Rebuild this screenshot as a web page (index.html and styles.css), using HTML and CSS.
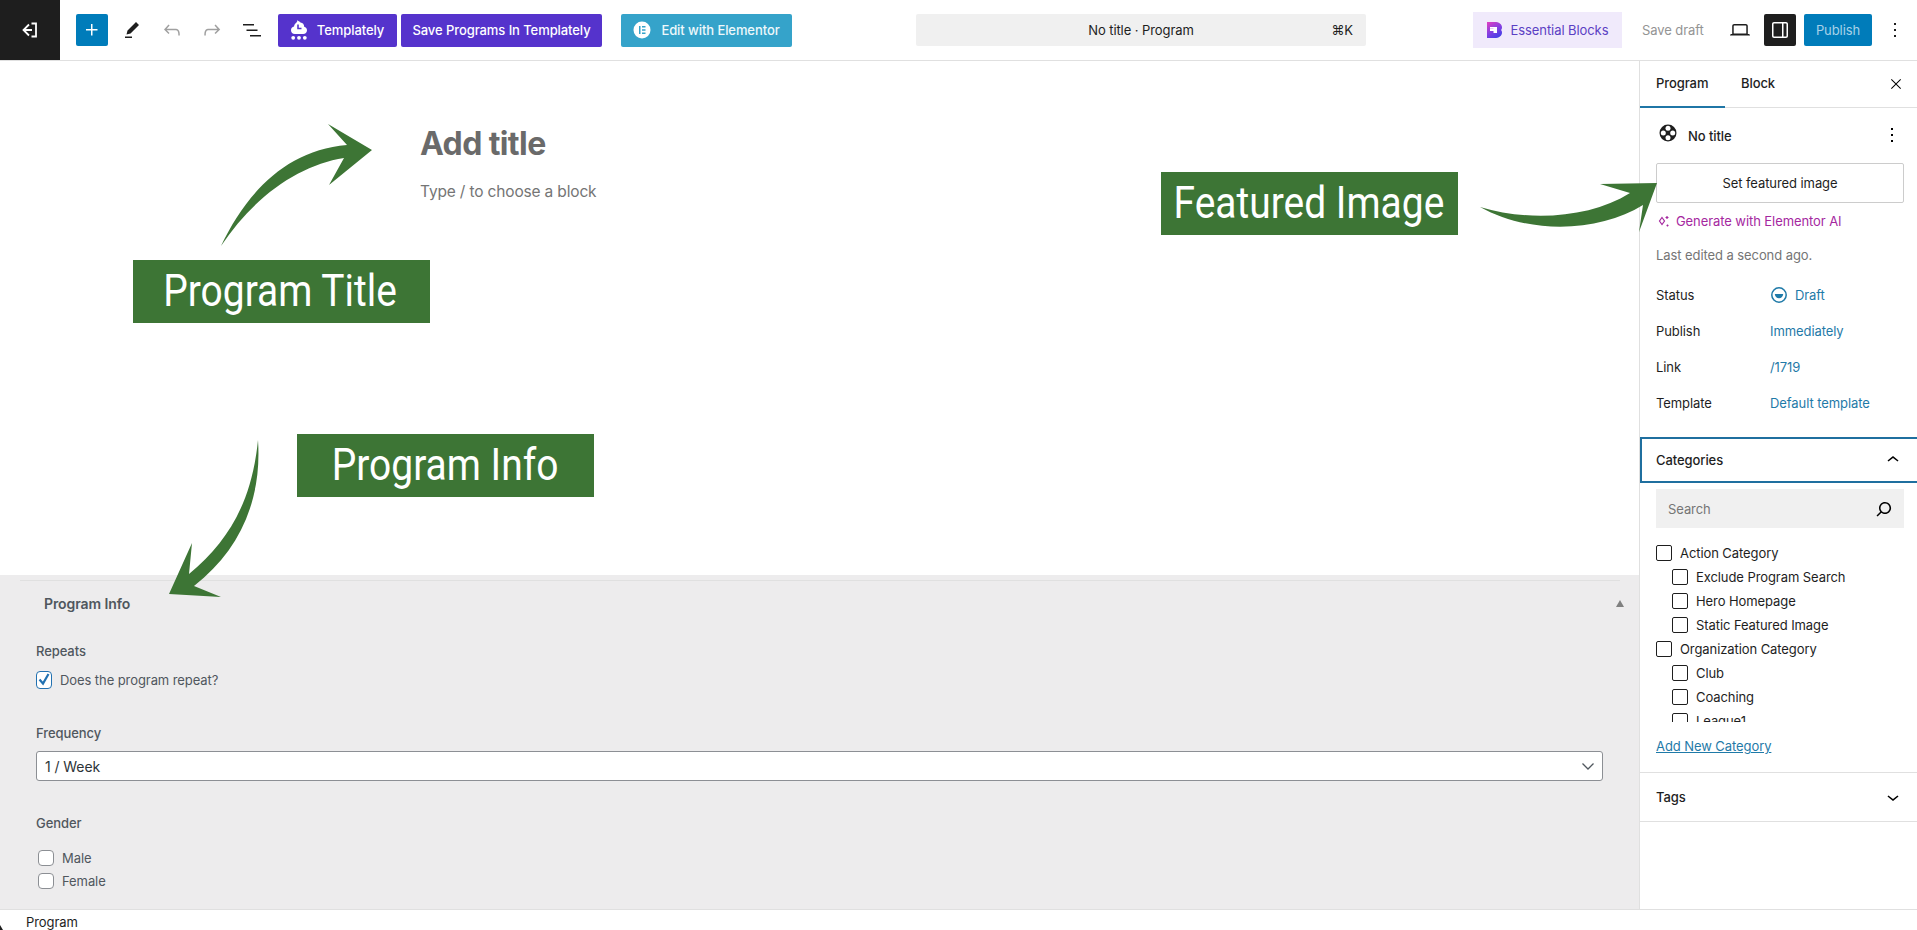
FILE: index.html
```html
<!DOCTYPE html>
<html lang="en">
<head>
<meta charset="utf-8">
<title>No title - Program</title>
<link rel="stylesheet" href="styles.css">
</head>
<body>
<div class="app">
  <header class="topbar">
    <a class="back"><svg width="24" height="24" viewBox="0 0 24 24" class="back-ico"><path d="M11 6.500 5.500 12l5.500 5.500M5.500 12H14M13.500 5.500H18V18.500H13.500"/></svg></a>
    <div class="tools">
      <button class="add"><svg width="24" height="24" viewBox="0 0 24 24"><path d="M11 12.500V17.500H12.500V12.500H17.500V11H12.500V6H11V11H6V12.500H11Z"/></svg></button>
      <button class="tool"><svg width="24" height="24" viewBox="0 0 24 24"><path d="m19 7-3-3-8.500 8.500-1 4 4-1L19 7Zm-7 11.500H5V20h7v-1.500Z"/></svg></button>
      <button class="tool dim"><svg width="24" height="24" viewBox="0 0 24 24"><path d="M18.300 11.700c-.6-.6-1.400-.9-2.300-.9H6.700l2.900-3.300-1.100-1-4.500 5L8.500 16l1-1-2.700-2.700H16c.5 0 .9.200 1.300.5 1 1 1 3.400 1 4.500v.3h1.500v-.2c0-1.500 0-4.300-1.500-5.700z"/></svg></button>
      <button class="tool dim"><svg width="24" height="24" viewBox="0 0 24 24"><path d="M15.600 6.500l-1.100 1 2.900 3.300H8c-.9 0-1.700.3-2.300.9-1.400 1.500-1.400 4.200-1.400 5.600v.2h1.500v-.3c0-1.100 0-3.500 1-4.500.3-.3.7-.5 1.300-.5h9.200L14.500 15l1.100 1.100 4.600-4.600-4.600-5z"/></svg></button>
      <button class="tool"><svg width="24" height="24" viewBox="0 0 24 24"><path d="M3 6h11v1.500H3V6Zm3.500 5.500h11V13h-11v-1.500ZM21 17H10v1.500h11V17Z"/></svg></button>
    </div>
    <button class="btn purple templately"><svg width="16" height="20" viewBox="0 0 16 20" class="tpl-ico"><path d="M6.500 0c.3 1.500 2.300 1 3 2.600 2.300.2 3.700 2 3.700 4.200 1.700.3 2.800 1.700 2.800 3.400 0 2-1.600 3.800-3.800 3.800H3.800C1.600 14 0 12.300 0 10.200 0 8.400 1.200 6.900 3 6.600c.2-2 1.500-3.200 2.500-4 .5-.7.900-1.600 1-2.600Z"/><path class="cut" d="M7 4.500v4h3.500"/><circle cx="2.200" cy="17.800" r="1.900"/><circle cx="8" cy="17.800" r="1.900"/><circle cx="13.800" cy="17.800" r="1.900"/></svg>Templately</button>
    <button class="btn purple save-tpl">Save Programs In Templately</button>
    <button class="btn elementor"><svg width="18" height="18" viewBox="0 0 18 18"><circle cx="9" cy="9" r="8.500" fill="#fff"/><path class="el-e" d="M6 5h1.500v8H6zM9 5h3.500v1.500H9zM9 8.250h3.500v1.500H9zM9 11.500h3.500V13H9z"/></svg>Edit with Elementor</button>
    <div class="command"><span class="command-title">No title · Program</span><span class="command-key">⌘K</span></div>
    <div class="actions">
      <div class="eb"><svg width="15" height="16" viewBox="0 0 15 16"><defs><linearGradient id="ebg" x1="0" y1="0" x2="0.600" y2="1"><stop offset="0" stop-color="#e23fc0"/><stop offset="0.550" stop-color="#8a3fe0"/><stop offset="1" stop-color="#4a3fe6"/></linearGradient></defs><path d="M0 0h7.500C12 0 15 2 15 5.500c0 1-.4 1.900-1 2.500.6.600 1 1.500 1 2.500C15 14 12 16 7.500 16H0Z" fill="url(#ebg)"/><path d="M3 5h7v6H6.500V9H3V7h3.500V6.800H3Z" fill="#fff"/></svg><span>Essential Blocks</span></div>
      <span class="draft">Save draft</span>
      <button class="icon-plain laptop"><svg width="24" height="24" viewBox="0 0 24 24"><path d="M20.500 16h-.7V8c0-1.100-.9-2-2-2H6.200c-1.100 0-2 .9-2 2v8h-.7c-.8 0-1.500.7-1.500 1.500h20c0-.8-.7-1.500-1.500-1.500zM5.700 8c0-.3.200-.5.500-.5h11.600c.3 0 .5.200.5.500v7.600H5.700V8z"/></svg></button>
      <button class="toggle"><svg width="24" height="24" viewBox="0 0 24 24"><path d="M18 4H6c-1.100 0-2 .9-2 2v12c0 1.100.9 2 2 2h12c1.100 0 2-.9 2-2V6c0-1.100-.9-2-2-2zm-4 14.500H6c-.3 0-.5-.2-.5-.5V6c0-.3.200-.5.500-.5h8v13zm4.500-.5c0 .3-.2.500-.5.500h-2.500v-13H18c.3 0 .5.200.5.500v12z"/></svg></button>
      <button class="publish">Publish</button>
      <button class="icon-plain more"><svg width="24" height="24" viewBox="0 0 24 24"><path d="M13 19h-2v-2h2v2zm0-6h-2v-2h2v2zm0-6h-2V5h2v2z"/></svg></button>
    </div>
  </header>

  <div class="workspace">
    <main class="editor">
      <section class="canvas">
        <h1 class="add-title">Add title</h1>
        <p class="appender">Type / to choose a block</p>
      </section>
      <section class="meta">
        <div class="meta-head"><h2>Program Info</h2><span class="tri"></span></div>
        <div class="field repeats">
          <div class="field-label">Repeats</div>
          <label class="check-line"><span class="meta-check on"><svg width="14" height="14" viewBox="0 0 14 14"><path d="M2.500 7.500 6 11.500 11.500 2"/></svg></span>Does the program repeat?</label>
        </div>
        <div class="field freq">
          <div class="field-label">Frequency</div>
          <div class="select"><span>1 / Week</span><svg width="16" height="16" viewBox="0 0 16 16"><path d="M2.500 5.500 8 11l5.500-5.500"/></svg></div>
        </div>
        <div class="field gender">
          <div class="field-label">Gender</div>
          <label class="opt"><span class="meta-check round"></span>Male</label>
          <label class="opt"><span class="meta-check round"></span>Female</label>
        </div>
      </section>
    </main>

    <aside class="sidebar">
      <div class="tabs">
        <span class="tab active">Program</span>
        <span class="tab">Block</span>
        <svg class="close" width="16" height="16" viewBox="0 0 24 24"><path d="m13.060 12 6.470-6.470-1.060-1.060L12 10.940 5.530 4.470 4.470 5.530 10.940 12l-6.470 6.470 1.060 1.060L12 13.060l6.470 6.470 1.060-1.060L13.060 12Z"/></svg>
      </div>
      <div class="summary">
        <div class="doc-row">
          <svg class="reel" width="18" height="18" viewBox="0 0 18 18"><circle cx="9" cy="9" r="8.500"/><circle class="hole" cx="9" cy="4.300" r="2.500"/><circle class="hole" cx="9" cy="13.700" r="2.500"/><circle class="hole" cx="4.300" cy="9" r="2.500"/><circle class="hole" cx="13.700" cy="9" r="2.500"/></svg>
          <strong>No title</strong>
          <svg class="doc-more" width="24" height="24" viewBox="0 0 24 24"><path d="M13 19h-2v-2h2v2zm0-6h-2v-2h2v2zm0-6h-2V5h2v2z"/></svg>
        </div>
        <button class="featured">Set featured image</button>
        <a class="gen"><svg width="14" height="14" viewBox="0 0 14 14"><path d="M6 3.500 8.500 7 6 10.500 3.500 7Z" class="spark"/><path d="M11 2v3M9.500 3.500h3M11.500 10.500v2M10.500 11.500h2" class="spark"/></svg>Generate with Elementor AI</a>
        <p class="edited">Last edited a second ago.</p>
        <dl class="props">
          <div class="prop"><dt>Status</dt><dd class="status"><svg width="18" height="18" viewBox="0 0 18 18"><circle cx="9" cy="9" r="7.200" class="ring"/><path d="M4.800 8h8.400a4.200 4.200 0 0 1-8.400 0Z" class="fill"/></svg>Draft</dd></div>
          <div class="prop"><dt>Publish</dt><dd>Immediately</dd></div>
          <div class="prop"><dt>Link</dt><dd>/1719</dd></div>
          <div class="prop"><dt>Template</dt><dd>Default template</dd></div>
        </dl>
      </div>
      <div class="panel-head focus"><span>Categories</span><svg width="24" height="24" viewBox="0 0 24 24"><path d="M6.500 12.400L12 8l5.500 4.400-.9 1.200L12 10l-4.500 3.600-1-1.200z"/></svg></div>
      <div class="panel-body">
        <div class="search"><span>Search</span><svg width="24" height="24" viewBox="0 0 24 24"><path d="M13 5c-3.300 0-6 2.700-6 6 0 1.400.5 2.700 1.300 3.700l-3.800 3.800 1.100 1.100 3.800-3.800c1 .8 2.300 1.300 3.700 1.300 3.300 0 6-2.700 6-6S16.300 5 13 5zm0 10.500c-2.500 0-4.500-2-4.500-4.500s2-4.500 4.500-4.500 4.500 2 4.500 4.500-2 4.500-4.500 4.500z"/></svg></div>
        <ul class="cats">
          <li><span class="box"></span>Action Category</li>
          <li class="child"><span class="box"></span>Exclude Program Search</li>
          <li class="child"><span class="box"></span>Hero Homepage</li>
          <li class="child"><span class="box"></span>Static Featured Image</li>
          <li><span class="box"></span>Organization Category</li>
          <li class="child"><span class="box"></span>Club</li>
          <li class="child"><span class="box"></span>Coaching</li>
          <li class="child"><span class="box"></span>League1</li>
        </ul>
        <a class="add-cat">Add New Category</a>
      </div>
      <div class="panel-head tags"><span>Tags</span><svg width="24" height="24" viewBox="0 0 24 24"><path d="M17.500 11.600L12 16l-5.500-4.400.9-1.200L12 14l4.500-3.600 1 1.200z"/></svg></div>
    </aside>
  </div>

  <footer class="crumbs">Program</footer>
</div>

<div class="notes">
  <svg class="arrows" width="1917" height="930" viewBox="0 0 1917 930">
    <path d="M221 246C245 195 285 150 347 145L328 124L372 150L329 185L344 158C300 165 255 195 221 246Z"/>
    <path d="M1480 207C1530 222 1590 218 1630 193L1600 184L1657 183L1639 232L1643 205C1600 232 1530 235 1480 207Z"/>
    <path d="M258 440C262 500 240 550 194 586L221 597L169 594L192 543L189 574C230 540 252 500 258 440Z"/>
  </svg>
  <div class="note note-title"><span>Program Title</span></div>
  <div class="note note-image"><span>Featured Image</span></div>
  <div class="note note-info"><span>Program Info</span></div>
</div>
</body>
</html>
```
FILE: styles.css
```css
* { box-sizing: border-box; }
html, body { margin: 0; height: 100%; overflow: hidden; background: #fff; }
body { font-family: Inter, "Noto Sans", sans-serif; font-size: 13px; letter-spacing: -0.08px; color: #1e1e1e; position: relative; }
button { font: inherit; letter-spacing: inherit; border: 0; background: none; padding: 0; color: inherit; }
svg { display: block; flex: none; }
h1, h2, p, dl, dd, ul { margin: 0; padding: 0; }
ul { list-style: none; }

.app { display: flex; flex-direction: column; height: 930px; }

/* Top bar */
.topbar { display: flex; align-items: center; height: 61px; flex: none; border-bottom: 1px solid #e0e0e0; }
.back { width: 60px; height: 60px; background: #1e1e1e; display: flex; align-items: center; justify-content: center; }
.back-ico { fill: none; stroke: #fff; stroke-width: 1.800; }
.tools { display: flex; align-items: center; margin-left: 16px; }
.add { width: 32px; height: 32px; background: #007cba; fill: #fff; border-radius: 2px; display: flex; align-items: center; justify-content: center; margin-right: 4px; }
.tool { width: 40px; height: 32px; display: flex; align-items: center; justify-content: center; fill: #1e1e1e; }
.tool.dim { fill: #a0a0a0; }
.btn { height: 33px; border-radius: 2px; color: #fff; font-weight: 500; display: flex; align-items: center; justify-content: center; }
.purple { background: #5533cc; }
.templately { width: 119px; margin-left: 6px; gap: 10px; }
.tpl-ico { fill: #fff; }
.tpl-ico .cut { fill: none; stroke: #5533cc; stroke-width: 1.600; }
.save-tpl { width: 201px; margin-left: 4px; }
.elementor { width: 171px; margin-left: 19px; background: #35a3ca; gap: 10px; color: #eef8fb; }
.el-e { fill: #35a3ca; }
.command { width: 450px; height: 32px; margin-left: 124px; background: #f0f0f0; border-radius: 2px; display: flex; align-items: center; justify-content: center; position: relative; }
.command-key { position: absolute; right: 13px; }
.actions { margin-left: auto; display: flex; align-items: center; padding-right: 10px; }
.eb { width: 149px; height: 36px; background: #f0eafb; display: flex; align-items: center; justify-content: center; gap: 9px; color: #5b3fc4; }
.draft { margin-left: 20px; width: 61px; color: #949494; white-space: nowrap; }
.icon-plain { width: 24px; height: 24px; fill: #1e1e1e; }
.laptop { margin-left: 25px; }
.toggle { width: 32px; height: 32px; margin-left: 12px; background: #1e1e1e; fill: #fff; border-radius: 2px; display: flex; align-items: center; justify-content: center; }
.publish { width: 68px; height: 32px; margin-left: 8px; background: #007cba; color: #a8d2e8; border-radius: 2px; }
.more { margin-left: 11px; }

/* Workspace */
.workspace { flex: 1; min-height: 0; display: flex; }
.editor { flex: 1; min-width: 0; display: flex; flex-direction: column; overflow: hidden; }
.canvas { height: 514px; flex: none; padding: 63px 0 0 420px; }
.add-title { font-size: 32px; line-height: 40px; font-weight: 700; color: #6a6a6a; letter-spacing: -0.6px; }
.appender { margin-top: 16px; font-size: 15.500px; line-height: 24px; letter-spacing: -0.16px; color: #757575; }

.meta { flex: 1; background: #edeced; color: #50575e; padding-top: 5px; }
.meta-head { margin: 0 19px 0 20px; border-top: 1px solid #e0e0e0; height: 46px; padding-left: 24px; display: flex; align-items: center; justify-content: space-between; }
.meta-head h2 { font-size: 14px; line-height: 46px; font-weight: 600; }
.tri { width: 0; height: 0; border-left: 4px solid transparent; border-right: 4px solid transparent; border-bottom: 7px solid #808080; margin-right: -4px; }
.field { padding: 0 36px; }
.field-label { line-height: 16px; font-weight: 500; }
.repeats { margin-top: 17px; }
.check-line { display: flex; align-items: center; gap: 8px; margin-top: 13px; height: 16px; }
.meta-check { width: 16px; height: 16px; background: #fff; border: 1px solid #8c8f94; border-radius: 4px; display: block; }
.meta-check.on { border-color: #2271b1; height: 18px; width: 16px; }
.meta-check.on svg { fill: none; stroke: #2271b1; stroke-width: 2.200; }
.freq { margin-top: 37px; }
.select { margin-top: 10px; height: 30px; width: 1567px; background: #fff; border: 1px solid #8c8f94; border-radius: 3px; color: #2c3338; font-size: 14px; padding: 0 6px 0 8px; display: flex; align-items: center; justify-content: space-between; }
.select svg { fill: none; stroke: #50575e; stroke-width: 1.300; }
.gender { margin-top: 34px; }
.opt { display: flex; align-items: center; gap: 8px; padding-left: 2px; height: 16px; margin-top: 7px; }
.gender .field-label + .opt { margin-top: 19px; }

/* Sidebar */
.sidebar { width: 278px; flex: none; border-left: 1px solid #e0e0e0; }
.tabs { height: 47px; border-bottom: 1px solid #e0e0e0; display: flex; align-items: center; position: relative; }
.tab { height: 47px; line-height: 44px; padding: 0 16px; font-weight: 500; }
.tab.active { width: 85px; box-shadow: inset 0 -2px 0 #1f76a6; }
.close { position: absolute; right: 13px; top: 15px; }
.summary { padding: 0 16px 16px; }
.doc-row { display: flex; align-items: center; height: 55px; position: relative; }
.reel { margin-left: 3px; margin-top: -5px; fill: #1e1e1e; }
.reel .hole { fill: #fff; }
.doc-row strong { margin-left: 11px; font-weight: 500; }
.doc-more { position: absolute; right: -3px; top: 15px; }
.featured { display: block; width: 248px; height: 40px; background: #fff; border: 1px solid #ccc; border-radius: 2px; }
.gen { display: flex; align-items: center; gap: 6px; margin-top: 9px; height: 18px; color: #a5289f; }
.spark { fill: none; stroke: #a5289f; stroke-width: 1.200; }
.edited { margin-top: 16px; line-height: 18px; color: #757575; }
.props { margin-top: 13px; }
.prop { display: flex; align-items: center; height: 36px; }
.prop dt { width: 114px; }
.prop dd { color: #1f7aa8; }
.status { display: flex; align-items: center; gap: 7px; }
.ring { fill: none; stroke: #1f7aa8; stroke-width: 1.500; }
.fill { fill: #1f7aa8; }
.panel-head { display: flex; align-items: center; justify-content: space-between; padding: 0 12px 0 14px; font-weight: 500; }
.focus { height: 46px; border: 2px solid #1f6f9f; border-right: 0; padding: 0 12px 0 14px; }
.panel-body { padding: 6px 13px 0 16px; height: 290px; border-bottom: 1px solid #e0e0e0; }
.search { width: 248px; height: 39px; background: #f0f0f0; display: flex; align-items: center; justify-content: space-between; padding: 0 8px 0 12px; color: #757575; }
.cats { margin-top: 13px; height: 181px; overflow: hidden; }
.cats li { display: flex; align-items: center; height: 24px; gap: 8px; }
.cats .child { padding-left: 16px; }
.box { width: 16px; height: 16px; border: 1px solid #1e1e1e; border-radius: 2px; background: #fff; }
.add-cat { display: block; margin-top: 15px; line-height: 18px; color: #1f7aa8; text-decoration: underline; }
.tags { height: 49px; padding: 0 12px 0 16px; border-bottom: 1px solid #e0e0e0; }

/* Breadcrumb */
.crumbs { height: 21px; flex: none; border-top: 1px solid #e0e0e0; padding: 5px 0 0 26px; line-height: 15px; color: #1e1e1e; position: relative; overflow: hidden; }
.crumbs::before { content: ""; position: absolute; left: 0; bottom: 0; border-left: 3px solid #1e1e1e; border-top: 5px solid transparent; }

/* Annotations painted on top of the screenshot */
.notes { position: absolute; inset: 0; pointer-events: none; }
.arrows { position: absolute; left: 0; top: 0; fill: #3d7535; }
.note { position: absolute; width: 297px; height: 63px; background: #3d7535; color: #fff; font-family: Roboto, sans-serif; font-size: 44px; letter-spacing: 0; line-height: 63px; text-align: center; overflow: hidden; white-space: nowrap; }
.note span { display: inline-block; transform: scaleX(0.885); transform-origin: center; margin: 0 -30px; }
.note-title { left: 133px; top: 260px; padding-right: 2px; }
.note-image { left: 1161px; top: 172px; padding-right: 2px; }
.note-info { left: 297px; top: 434px; }
```
